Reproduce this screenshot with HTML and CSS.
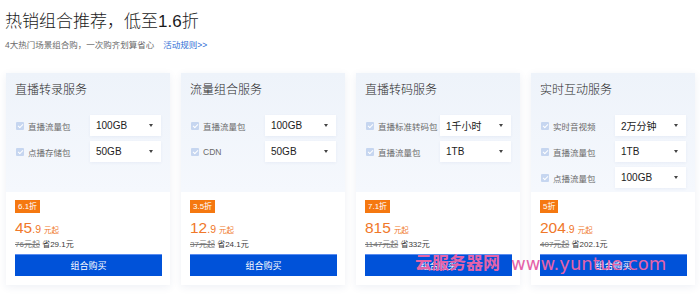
FILE: index.html
```html
<!DOCTYPE html>
<html lang="zh">
<head>
<meta charset="utf-8">
<link rel="stylesheet" href="styles.css">
</head>
<body>
<div class="page">
  <header class="head">
    <h1 class="title">热销组合推荐，低至1.6折</h1>
    <p class="sub">4大热门场景组合购，一次购齐划算省心<a class="rule">活动规则&gt;&gt;</a></p>
  </header>
  <div class="cards">
    <div class="card">
      <div class="top">
        <h2 class="ct">直播转录服务</h2>
        <div class="rows">
          <div class="row"><span class="cb"></span><span class="lab">直播流量包</span><span class="sel">100GB<i class="caret"></i></span></div>
          <div class="row"><span class="cb"></span><span class="lab">点播存储包</span><span class="sel">50GB<i class="caret"></i></span></div>
        </div>
      </div>
      <div class="bot">
        <span class="badge">6.1折</span>
        <div class="price"><span class="big">45</span><span class="dec">.9</span><span class="unit">元起</span></div>
        <div class="old"><s>76元起</s> 省29.1元</div>
        <button class="buy">组合购买</button>
      </div>
    </div>
    <div class="card">
      <div class="top">
        <h2 class="ct">流量组合服务</h2>
        <div class="rows">
          <div class="row"><span class="cb"></span><span class="lab">直播流量包</span><span class="sel">100GB<i class="caret"></i></span></div>
          <div class="row"><span class="cb"></span><span class="lab">CDN</span><span class="sel">50GB<i class="caret"></i></span></div>
        </div>
      </div>
      <div class="bot">
        <span class="badge">3.5折</span>
        <div class="price"><span class="big">12</span><span class="dec">.9</span><span class="unit">元起</span></div>
        <div class="old"><s>37元起</s> 省24.1元</div>
        <button class="buy">组合购买</button>
      </div>
    </div>
    <div class="card">
      <div class="top">
        <h2 class="ct">直播转码服务</h2>
        <div class="rows">
          <div class="row"><span class="cb"></span><span class="lab">直播标准转码包</span><span class="sel">1千小时<i class="caret"></i></span></div>
          <div class="row"><span class="cb"></span><span class="lab">直播流量包</span><span class="sel">1TB<i class="caret"></i></span></div>
        </div>
      </div>
      <div class="bot">
        <span class="badge">7.1折</span>
        <div class="price"><span class="big">815</span><span class="unit">元起</span></div>
        <div class="old"><s>1147元起</s> 省332元</div>
        <button class="buy">组合购买</button>
      </div>
    </div>
    <div class="card">
      <div class="top">
        <h2 class="ct">实时互动服务</h2>
        <div class="rows">
          <div class="row"><span class="cb"></span><span class="lab">实时音视频</span><span class="sel">2万分钟<i class="caret"></i></span></div>
          <div class="row"><span class="cb"></span><span class="lab">直播流量包</span><span class="sel">1TB<i class="caret"></i></span></div>
          <div class="row"><span class="cb"></span><span class="lab">点播流量包</span><span class="sel">100GB<i class="caret"></i></span></div>
        </div>
      </div>
      <div class="bot">
        <span class="badge">5折</span>
        <div class="price"><span class="big">204</span><span class="dec">.9</span><span class="unit">元起</span></div>
        <div class="old"><s>407元起</s> 省202.1元</div>
        <button class="buy">组合购买</button>
      </div>
    </div>
  </div>
  <div class="wm"><span class="wm-cn">云服务器网</span><span class="wm-en">www.yuntue.com</span></div>
</div>
</body>
</html>
```

FILE: styles.css
```css
* { box-sizing: border-box; }
html, body { margin: 0; padding: 0; background: #fff; }
body {
  font-family: "Liberation Sans", "Noto Sans CJK SC", sans-serif;
  color: #000;
  width: 700px;
  height: 299px;
  overflow: hidden;
}
.page { position: relative; padding: 11px 5px 0 6px; }
.title {
  margin: 0 0 0 -1px;
  font-size: 17px;
  font-weight: 300;
  line-height: 22px;
  color: #1a1a1a;
}
.sub {
  margin: 6px 0 0 -1px;
  font-size: 8.5px;
  line-height: 12px;
  color: #6b6b6b;
}
.rule { color: #2f6fd6; margin-left: 9px; }
.cards {
  display: flex;
  gap: 11px;
  margin-top: 22px;
}
.card {
  width: 164px;
  height: 212px;
  display: flex;
  flex-direction: column;
  background: #fff;
  box-shadow: 0 2px 8px rgba(40, 70, 130, 0.08);
}
.top {
  height: 119px;
  background: linear-gradient(180deg, #eef3fa 0%, #f5f8fd 100%);
  padding: 10px 9px 0 9px;
}
.ct {
  margin: 0;
  font-size: 12px;
  font-weight: 300;
  line-height: 15px;
  color: #2a2a2a;
}
.rows {
  margin-top: 17px;
  display: flex;
  flex-direction: column;
  gap: 5px;
}
.row {
  display: flex;
  align-items: center;
  height: 21px;
}
.cb {
  width: 8px;
  height: 8px;
  margin-left: 1px;
  background: #c6d6f0;
  border-radius: 1px;
  position: relative;
  flex: none;
}
.cb::after {
  content: "";
  position: absolute;
  left: 2.5px;
  top: 1px;
  width: 2px;
  height: 4px;
  border: solid #fff;
  border-width: 0 1px 1px 0;
  transform: rotate(45deg);
}
.lab {
  margin-left: 4px;
  font-size: 8.5px;
  color: #6a6a6a;
  flex: 1;
  white-space: nowrap;
}
.sel {
  width: 71px;
  height: 21px;
  flex: none;
  background: #fff;
  display: flex;
  align-items: center;
  padding-left: 6px;
  font-size: 10px;
  color: #222;
  position: relative;
  box-shadow: 0 1px 3px rgba(40, 70, 130, 0.06);
}
.caret {
  position: absolute;
  right: 8px;
  top: 9px;
  width: 0;
  height: 0;
  border-left: 2.5px solid transparent;
  border-right: 2.5px solid transparent;
  border-top: 3px solid #444;
}
.bot {
  flex: 1;
  padding: 8px 9px 0 9px;
  display: flex;
  flex-direction: column;
  align-items: flex-start;
}
.badge {
  background: #f57810;
  color: #fff;
  font-size: 8px;
  line-height: 13px;
  height: 13px;
  padding: 0 3px;
}
.price {
  margin-top: 7px;
  color: #f0782a;
  line-height: 16px;
  height: 16px;
  white-space: nowrap;
}
.big { font-size: 15.5px; }
.dec { font-size: 10.5px; }
.unit { font-size: 7.5px; margin-left: 3px; }
.old {
  margin-top: 3px;
  font-size: 8px;
  line-height: 11px;
  color: #3a3a3a;
}
.old s { color: #777; }
.buy {
  margin-top: 4px;
  width: 147px;
  height: 22px;
  border: 0;
  border-top: 1px solid #5a8cf0;
  background: #0052d9;
  color: #fff;
  font-family: inherit;
  font-size: 9px;
  padding: 0;
}
.wm {
  position: absolute;
  left: 415px;
  top: 253px;
  display: flex;
  align-items: center;
  gap: 11px;
  color: #e563a8;
  pointer-events: none;
}
.wm-cn {
  font-size: 17px;
  font-weight: bold;
  line-height: 22px;
}
.wm-en {
  font-family: "DejaVu Sans", sans-serif;
  font-size: 18px;
  line-height: 22px;
}
```
